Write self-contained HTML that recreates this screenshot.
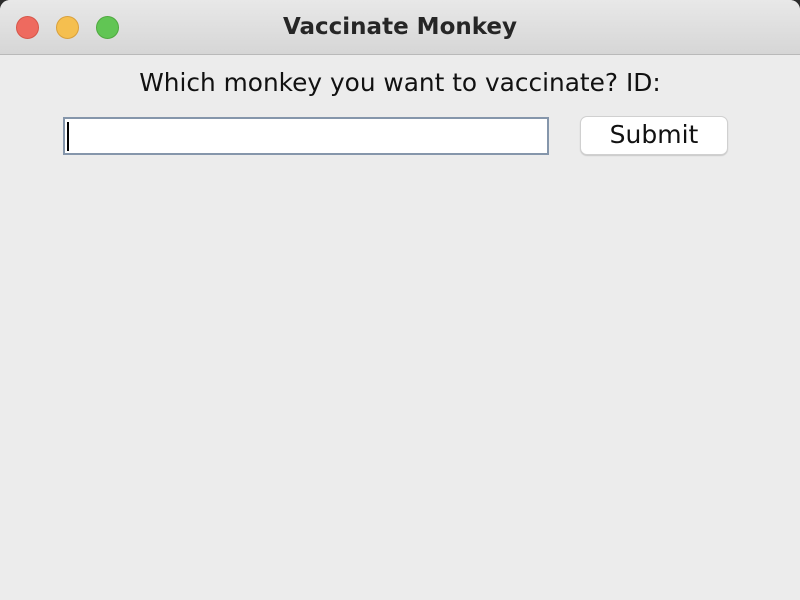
<!DOCTYPE html>
<html><head><style>
html,body{margin:0;padding:0;width:800px;height:600px;overflow:hidden;background:#2b2b2b;}
.win{position:absolute;left:0;top:0;width:800px;height:600px;background:#ececec;border-radius:10px 10px 0 0;overflow:hidden;font-family:"DejaVu Sans","Liberation Sans",sans-serif;}
.tb{position:absolute;left:0;top:0;width:800px;height:54px;background:linear-gradient(#e8e8e8,#d6d6d6);border-bottom:1px solid #b9b9b9;}
.dot{position:absolute;top:16px;width:23px;height:23px;border-radius:50%;box-sizing:border-box;}
.title{position:absolute;left:0;right:0;top:12px;text-align:center;font-weight:bold;font-size:23px;line-height:30px;color:#262626;}
.lbl{position:absolute;left:0;right:0;top:67px;text-align:center;font-size:24.8px;line-height:32px;color:#111;}
.tf{position:absolute;left:63px;top:117px;width:486px;height:38px;box-sizing:border-box;background:#fff;border:2px solid #8596ab;}
.caret{position:absolute;left:2px;top:3px;width:2px;height:29px;background:#000;}
.btn{position:absolute;left:580px;top:116px;width:148px;height:39px;box-sizing:border-box;background:#fff;border:1px solid #d0d0d0;border-radius:7px;box-shadow:0 1px 1px rgba(0,0,0,.15);text-align:center;font-size:25px;line-height:36px;color:#111;}
</style></head><body>
<div class="win">
<div class="tb">
<div class="dot" style="left:16px;background:#ee6a5f;border:1px solid #d65649"></div>
<div class="dot" style="left:56px;background:#f5bf4f;border:1px solid #d9a03b"></div>
<div class="dot" style="left:96px;background:#61c554;border:1px solid #4fa93f"></div>
<div class="title">Vaccinate Monkey</div>
</div>
<div class="lbl">Which monkey you want to vaccinate? ID:</div>
<div class="tf"><div class="caret"></div></div>
<div class="btn">Submit</div>
</div>
</body></html>
